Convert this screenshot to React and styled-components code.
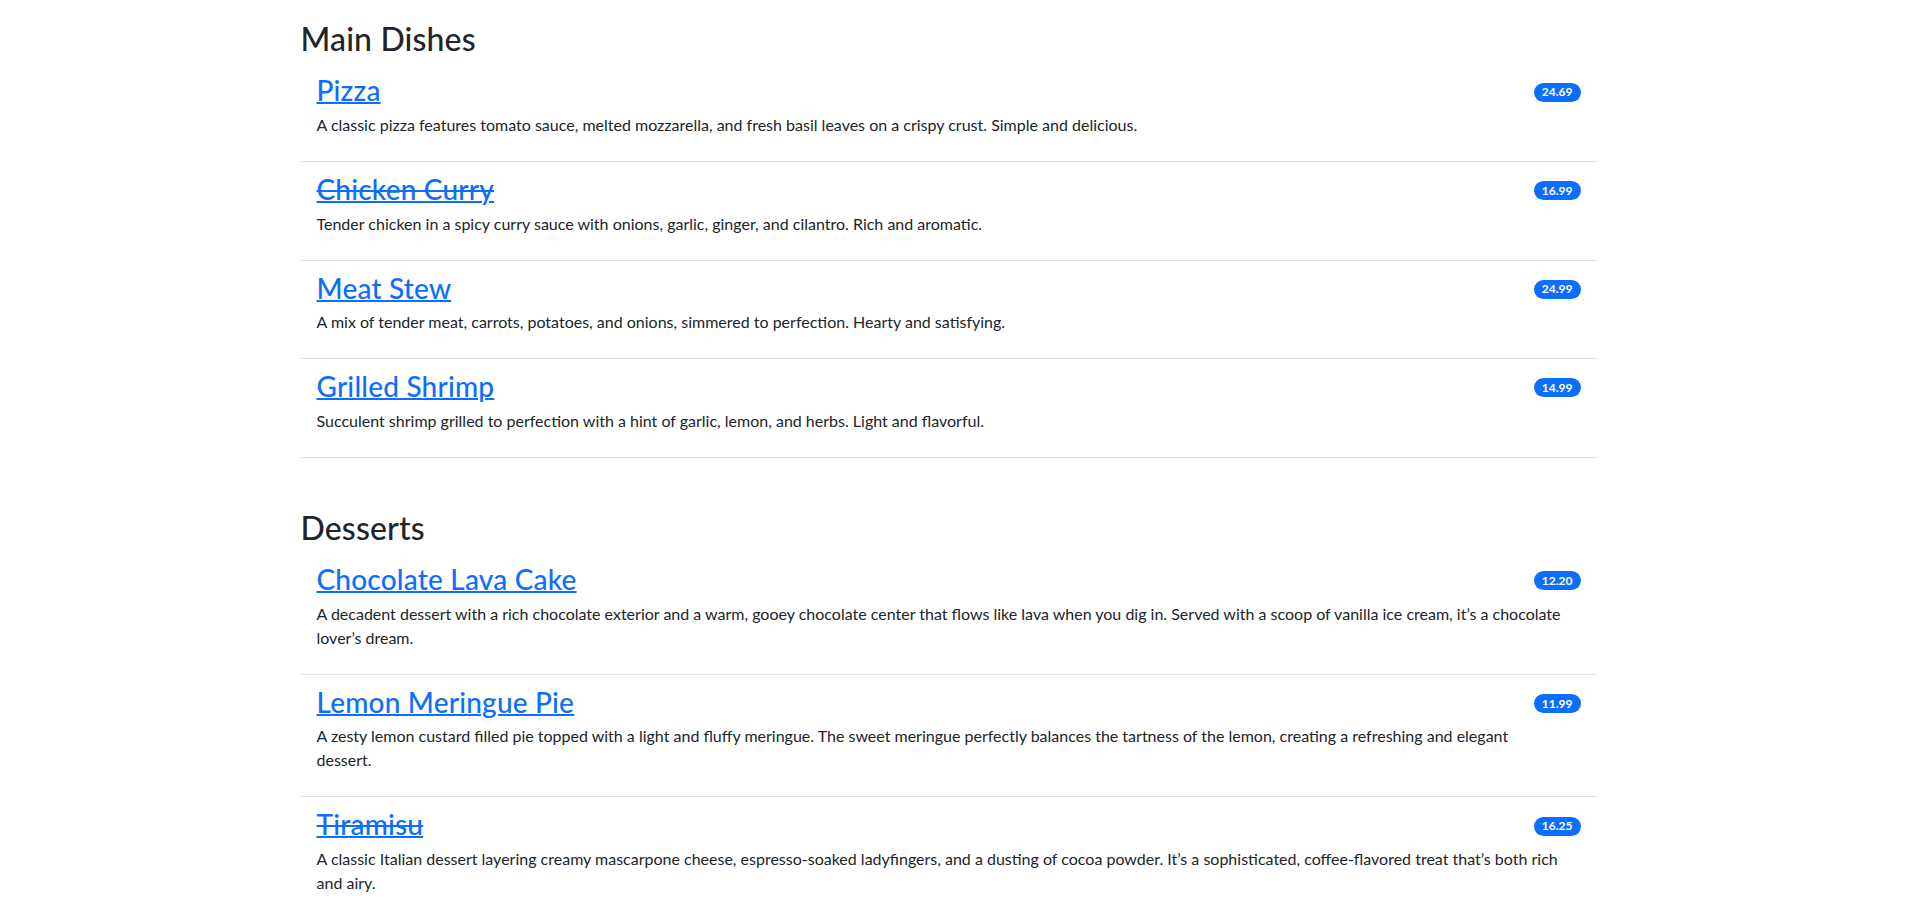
import React from "react";
import styled, { createGlobalStyle } from "styled-components";

const GlobalStyle = createGlobalStyle`
  html { overflow-y: scroll; }
  body {
    margin: 0;
    padding-right: 12px;
    background: #ffffff;
    color: #212529;
    font-family: "Segoe UI", Lato, "Noto Sans", sans-serif;
    font-size: 16px;
    line-height: 1.5;
  }
  * { box-sizing: border-box; }
`;

const Container = styled.main`
  max-width: 1320px;
  margin: 0 auto;
  padding: 17px 12px 0;
`;

const Section = styled.section`
  margin-bottom: 48px;
  &:last-child { margin-bottom: 0; }
`;

const SectionTitle = styled.h2`
  margin: 0 0 5px;
  padding-top: 3px;
  font-size: 32px;
  font-weight: 500;
  line-height: 1.2;
  letter-spacing: 0.15px;
  color: #212529;
`;

const List = styled.ul`
  list-style: none;
  margin: 0;
  padding: 0;
`;

const Item = styled.li`
  padding: 8px 16px;
  border-bottom: 1px solid #dee2e6;
`;

const TitleRow = styled.div`
  display: flex;
  justify-content: space-between;
  align-items: center;
`;

const DishTitle = styled.h3`
  margin: 0 0 5px;
  padding-top: 3px;
  font-size: 28px;
  font-weight: 500;
  line-height: 1.2;
  letter-spacing: 0.2px;
`;

const DishLink = styled.a`
  color: #0d6efd;
  text-decoration: ${(p) => (p.$soldOut ? "underline line-through" : "underline")};
  text-decoration-thickness: 1.5px;
`;

const Price = styled.span`
  display: inline-block;
  padding: 3.5px 8px;
  font-size: 12px;
  font-weight: 700;
  line-height: 1;
  color: #fff;
  background: #0d6efd;
  border-radius: 50rem;
  white-space: nowrap;
`;

const Description = styled.p`
  margin: 0 0 16px;
  white-space: pre-line;
`;

const menu = [
  {
    title: "Main Dishes",
    items: [
      {
        name: "Pizza",
        price: "24.69",
        desc: "A classic pizza features tomato sauce, melted mozzarella, and fresh basil leaves on a crispy crust. Simple and delicious.",
      },
      {
        name: "Chicken Curry",
        price: "16.99",
        soldOut: true,
        desc: "Tender chicken in a spicy curry sauce with onions, garlic, ginger, and cilantro. Rich and aromatic.",
      },
      {
        name: "Meat Stew",
        price: "24.99",
        desc: "A mix of tender meat, carrots, potatoes, and onions, simmered to perfection. Hearty and satisfying.",
      },
      {
        name: "Grilled Shrimp",
        price: "14.99",
        desc: "Succulent shrimp grilled to perfection with a hint of garlic, lemon, and herbs. Light and flavorful.",
      },
    ],
  },
  {
    title: "Desserts",
    items: [
      {
        name: "Chocolate Lava Cake",
        price: "12.20",
        desc: "A decadent dessert with a rich chocolate exterior and a warm, gooey chocolate center that flows like lava when you dig in. Served with a scoop of vanilla ice cream, it\u2019s a chocolate lover\u2019s dream.",
      },
      {
        name: "Lemon Meringue Pie",
        price: "11.99",
        desc: "A zesty lemon custard filled pie topped with a light and fluffy meringue. The sweet meringue perfectly balances the tartness of the lemon, creating a refreshing and elegant\ndessert.",
      },
      {
        name: "Tiramisu",
        price: "16.25",
        soldOut: true,
        desc: "A classic Italian dessert layering creamy mascarpone cheese, espresso-soaked ladyfingers, and a dusting of cocoa powder. It\u2019s a sophisticated, coffee-flavored treat that\u2019s both rich and airy.",
      },
    ],
  },
];

export default function App() {
  return (
    <>
      <GlobalStyle />
      <Container>
        {menu.map((section) => (
          <Section key={section.title}>
            <SectionTitle>{section.title}</SectionTitle>
            <List>
              {section.items.map((item) => (
                <Item key={item.name}>
                  <TitleRow>
                    <DishTitle>
                      <DishLink href="#" $soldOut={item.soldOut}>
                        {item.name}
                      </DishLink>
                    </DishTitle>
                    <Price>{item.price}</Price>
                  </TitleRow>
                  <Description>{item.desc}</Description>
                </Item>
              ))}
            </List>
          </Section>
        ))}
      </Container>
    </>
  );
}
